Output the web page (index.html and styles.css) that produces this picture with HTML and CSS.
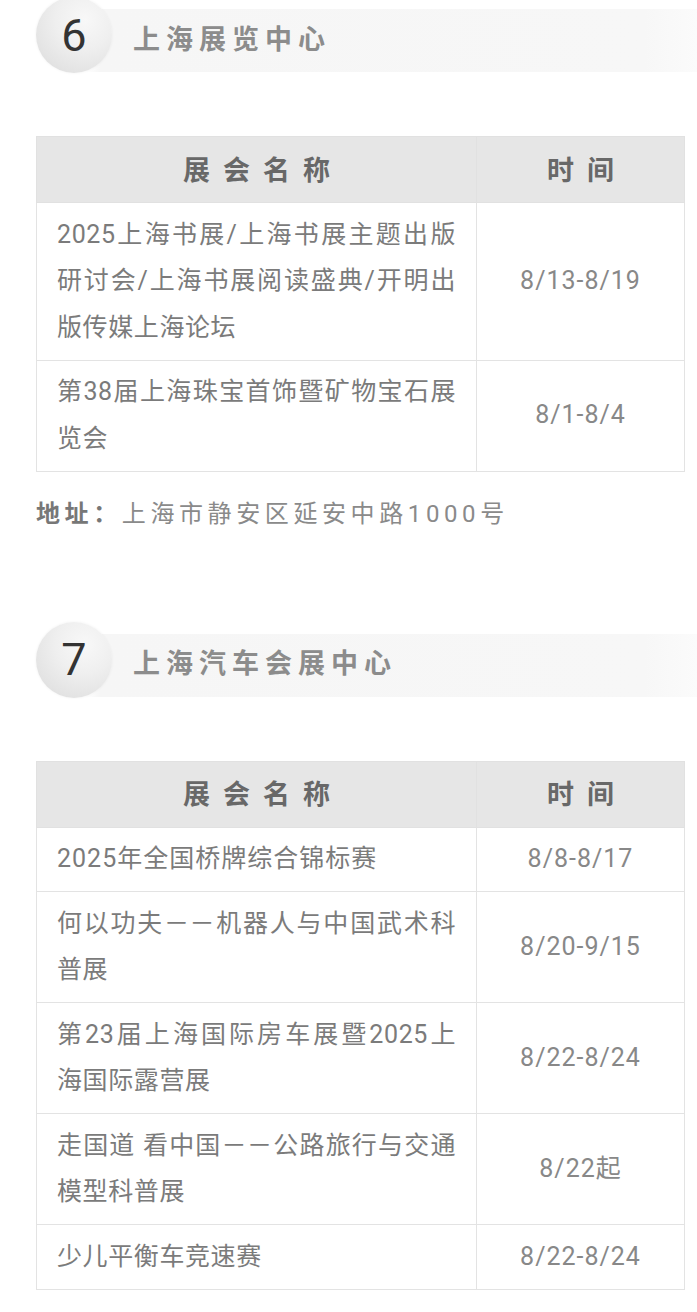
FILE: index.html
```html
<!DOCTYPE HTML>
<html>
<head>
<meta charset="utf-8">
<title>上海展馆八月展会</title>
<link rel="stylesheet" href="styles.css">
</head>
<body>

<div class="page">

<div class="venue">
<div class="venue_head">
<span class="venue_num">6</span>
<h2 class="venue_name">上海展览中心</h2>
</div>
<table class="expo">
<colgroup><col class="col_name"><col class="col_time"></colgroup>
<tr><th>展会名称</th><th>时间</th></tr>
<tr>
<td class="name"><span class="ln">2025上海书展/上海书展主题出版</span><span class="ln">研讨会/上海书展阅读盛典/开明出</span>版传媒上海论坛</td>
<td class="time">8/13-8/19</td>
</tr>
<tr>
<td class="name"><span class="ln">第38届上海珠宝首饰暨矿物宝石展</span>览会</td>
<td class="time">8/1-8/4</td>
</tr>
</table>
<p class="addr"><b>地址：</b>上海市静安区延安中路1000号</p>
</div>

<div class="venue">
<div class="venue_head">
<span class="venue_num">7</span>
<h2 class="venue_name">上海汽车会展中心</h2>
</div>
<table class="expo">
<colgroup><col class="col_name"><col class="col_time"></colgroup>
<tr><th>展会名称</th><th>时间</th></tr>
<tr>
<td class="name loose">2025年全国桥牌综合锦标赛</td>
<td class="time">8/8-8/17</td>
</tr>
<tr>
<td class="name"><span class="ln">何以功夫－－机器人与中国武术科</span>普展</td>
<td class="time">8/20-9/15</td>
</tr>
<tr>
<td class="name"><span class="ln">第23届上海国际房车展暨2025上</span>海国际露营展</td>
<td class="time">8/22-8/24</td>
</tr>
<tr>
<td class="name"><span class="ln">走国道 看中国－－公路旅行与交通</span>模型科普展</td>
<td class="time">8/22起</td>
</tr>
<tr>
<td class="name">少儿平衡车竞速赛</td>
<td class="time">8/22-8/24</td>
</tr>
</table>
</div>

</div>

</body>
</html>
```

FILE: styles.css
```css
html {
	background-color:#ffffff;
}
body {
	margin:0;
	font-family:Roboto, "Noto Sans CJK SC", sans-serif;
	color:#7b7b7b;
}
.page {
	padding:9px 13px 23px 36px;
}
.venue + .venue {
	margin-top:97px;
}

/* numbered title bar */
.venue_head {
	display:flex;
	align-items:flex-end;
	height:63px;
	margin-right:-13px;
	background:linear-gradient(to right, rgba(246,246,246,0) 50px, #f6f6f6 64px, #f7f7f7 92%, #fbfbfb 100%);
}
.venue_num {
	flex:none;
	width:76px;
	height:76px;
	border-radius:50%;
	display:flex;
	align-items:center;
	justify-content:center;
	margin-bottom:-1px;
	font-size:45px;
	color:#333333;
	background:radial-gradient(circle at 64% 30%, #f8f8f8 0%, #efefef 40%, #e3e3e3 75%, #d6d6d6 100%);
	box-shadow:0 0 3px rgba(0,0,0,0.06);
}
.venue_name {
	align-self:center;
	margin:0 0 1px 21px;
	font-size:27px;
	line-height:1;
	font-weight:bold;
	letter-spacing:6px;
	color:#8c8c8c;
}

/* tables */
.expo {
	width:648px;
	margin-top:64px;
	border-collapse:collapse;
	table-layout:fixed;
}
.col_name {
	width:440px;
}
.col_time {
	width:208px;
}
.expo th {
	height:62px;
	padding:0 0 3px 13px;
	background-color:#e6e6e6;
	border:1px solid #e1e1e1;
	font-size:27px;
	font-weight:bold;
	letter-spacing:13px;
	color:#686868;
}
.expo td {
	padding:8.5px 20px;
	border:1px solid #e3e3e3;
	font-size:25px;
	line-height:46.5px;
	vertical-align:middle;
}
.name {
	text-align:justify;
	letter-spacing:0.6px;
}
.name.loose {
	letter-spacing:1px;
}
.ln {
	display:block;
	text-align-last:justify;
}
.time {
	text-align:center;
	letter-spacing:1px;
	color:#888888;
}

.addr {
	margin:19px 0 0;
	font-size:24px;
	line-height:46px;
	letter-spacing:4.6px;
	color:#8a8a8a;
}
.addr b {
	color:#777777;
}
```
